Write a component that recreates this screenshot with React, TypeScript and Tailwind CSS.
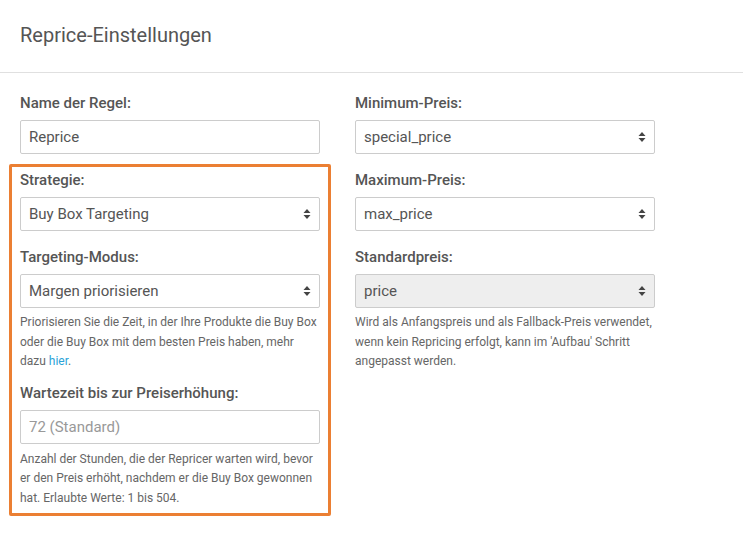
import type { ReactNode } from "react";

// Up/down caret shown inside the select boxes
function SortCaret() {
  return (
    <svg
      width="8"
      height="12"
      viewBox="0 0 8 12"
      className="pointer-events-none absolute right-[9px] top-1/2 -translate-y-1/2 text-[#444]"
      fill="currentColor"
    >
      <path d="M0.5 5 L4 1 L7.5 5 Z" />
      <path d="M0.5 7 L7.5 7 L4 11 Z" />
    </svg>
  );
}

function Label({ children }: { children: ReactNode }) {
  return (
    <label className="mb-[6px] block text-[15px] font-medium leading-[21px] text-[#555]">
      {children}
    </label>
  );
}

function TextInput({ value, placeholder }: { value?: string; placeholder?: string }) {
  return (
    <input
      readOnly
      value={value ?? ""}
      placeholder={placeholder}
      className="block h-[34px] w-full rounded-[2px] border border-[#ccc] bg-white pl-[8px] text-[15px] text-[#555] placeholder:text-[#999] focus:outline-none"
    />
  );
}

function Select({ value, disabled }: { value: string; disabled?: boolean }) {
  return (
    <div className="relative">
      <select
        disabled={disabled}
        defaultValue={value}
        className={`block h-[34px] w-full appearance-none rounded-[2px] border border-[#ccc] pl-[8px] text-[15px] text-[#555] focus:outline-none ${
          disabled ? "bg-[#eee]" : "bg-white"
        }`}
      >
        <option value={value}>{value}</option>
      </select>
      <SortCaret />
    </div>
  );
}

function Help({ children, className = "" }: { children: ReactNode; className?: string }) {
  return (
    <div className={`text-[12px] leading-[19.5px] text-[#666] ${className}`}>{children}</div>
  );
}

export default function App() {
  return (
    <div className="min-h-screen bg-white font-['Roboto',sans-serif]">
      {/* Header */}
      <div className="flex h-[73px] items-center border-b border-[#e0e0e0] px-5 pb-[2px]">
        <h1 className="text-[20px] font-normal text-[#555]">Reprice-Einstellungen</h1>
      </div>

      {/* Form */}
      <div className="flex gap-[35px] px-5 pt-5">
        {/* Left column */}
        <div className="w-[300px]">
          <Label>Name der Regel:</Label>
          <TextInput value="Reprice" />

          {/* Highlighted strategy block */}
          <div className="-mx-[11px] mt-[10px] rounded-[2px] border-[3px] border-[#eb7f33] px-[8px] pb-[5px] pt-[3px]">
            <Label>Strategie:</Label>
            <Select value="Buy Box Targeting" />

            <div className="mt-[16px]">
              <Label>Targeting-Modus:</Label>
              <Select value="Margen priorisieren" />
              <Help className="mt-[5px]">
                Priorisieren Sie die Zeit, in der Ihre Produkte die Buy Box oder die Buy Box mit dem
                besten Preis haben, mehr dazu <a className="text-[#2ba3d8]">hier</a>.
              </Help>
            </div>

            <div className="mt-[11px]">
              <Label>Wartezeit bis zur Preiserhöhung:</Label>
              <TextInput placeholder="72 (Standard)" />
              <Help className="mt-[6px]">
                Anzahl der Stunden, die der Repricer warten wird, bevor er den Preis erhöht, nachdem
                er die Buy Box gewonnen hat. Erlaubte Werte: 1 bis 504.
              </Help>
            </div>
          </div>
        </div>

        {/* Right column */}
        <div className="w-[300px]">
          <Label>Minimum-Preis:</Label>
          <Select value="special_price" />

          <div className="mt-[16px]">
            <Label>Maximum-Preis:</Label>
            <Select value="max_price" />
          </div>

          <div className="mt-[16px]">
            <Label>Standardpreis:</Label>
            <Select value="price" disabled />
            <Help className="mt-[5px]">
              Wird als Anfangspreis und als Fallback-Preis verwendet, wenn kein Repricing erfolgt,
              kann im 'Aufbau' Schritt angepasst werden.
            </Help>
          </div>
        </div>
      </div>
    </div>
  );
}
